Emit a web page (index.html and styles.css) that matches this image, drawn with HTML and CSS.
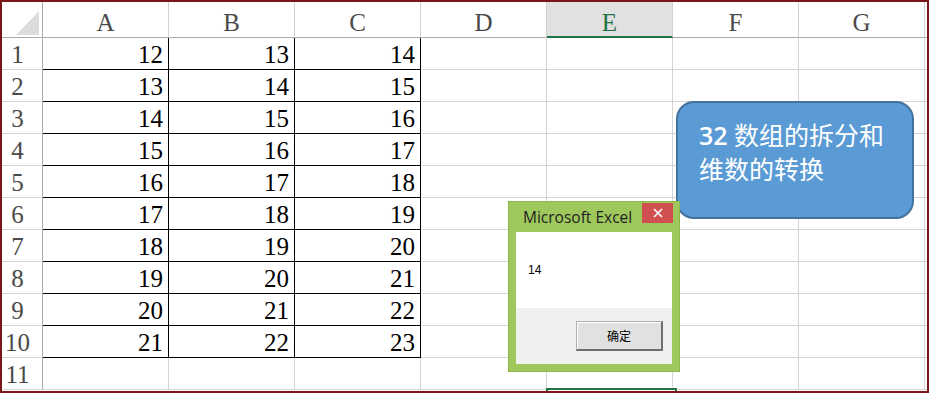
FILE: index.html
```html
<!DOCTYPE html>
<html>
<head>
<meta charset="utf-8">
<link rel="stylesheet" href="styles.css">
</head>
<body>
<div class="frame">
  <div class="sheet">
    <div class="hd corner"><div class="tri"></div></div>
    <div class="hd col">A</div><div class="hd col">B</div><div class="hd col">C</div><div class="hd col">D</div><div class="hd col sel">E</div><div class="hd col">F</div><div class="hd col">G</div><div class="hd col"></div>

    <div class="rh">1</div><div class="c b">12</div><div class="c b">13</div><div class="c b">14</div><div class="c"></div><div class="c"></div><div class="c"></div><div class="c"></div><div class="c"></div>
    <div class="rh">2</div><div class="c b">13</div><div class="c b">14</div><div class="c b">15</div><div class="c"></div><div class="c"></div><div class="c"></div><div class="c"></div><div class="c"></div>
    <div class="rh">3</div><div class="c b">14</div><div class="c b">15</div><div class="c b">16</div><div class="c"></div><div class="c"></div><div class="c"></div><div class="c"></div><div class="c"></div>
    <div class="rh">4</div><div class="c b">15</div><div class="c b">16</div><div class="c b">17</div><div class="c"></div><div class="c"></div><div class="c"></div><div class="c"></div><div class="c"></div>
    <div class="rh">5</div><div class="c b">16</div><div class="c b">17</div><div class="c b">18</div><div class="c"></div><div class="c"></div><div class="c"></div><div class="c"></div><div class="c"></div>
    <div class="rh">6</div><div class="c b">17</div><div class="c b">18</div><div class="c b">19</div><div class="c"></div><div class="c"></div><div class="c"></div><div class="c"></div><div class="c"></div>
    <div class="rh">7</div><div class="c b">18</div><div class="c b">19</div><div class="c b">20</div><div class="c"></div><div class="c"></div><div class="c"></div><div class="c"></div><div class="c"></div>
    <div class="rh">8</div><div class="c b">19</div><div class="c b">20</div><div class="c b">21</div><div class="c"></div><div class="c"></div><div class="c"></div><div class="c"></div><div class="c"></div>
    <div class="rh">9</div><div class="c b">20</div><div class="c b">21</div><div class="c b">22</div><div class="c"></div><div class="c"></div><div class="c"></div><div class="c"></div><div class="c"></div>
    <div class="rh">10</div><div class="c b">21</div><div class="c b">22</div><div class="c b">23</div><div class="c"></div><div class="c"></div><div class="c"></div><div class="c"></div><div class="c"></div>
    <div class="rh">11</div><div class="c"></div><div class="c"></div><div class="c"></div><div class="c"></div><div class="c"></div><div class="c"></div><div class="c"></div><div class="c"></div>
  </div>

  <div class="sel-box"></div>

  <div class="callout"><span class="num">32</span> 数组的拆分和<br>维数的转换</div>

  <div class="dialog">
    <div class="title">Microsoft Excel</div>
    <div class="close">
      <svg width="12" height="12" viewBox="0 0 12 12"><path d="M2 2 L10 10 M10 2 L2 10" stroke="#fff" stroke-width="1.6" fill="none"/></svg>
    </div>
    <div class="client">
      <div class="msg">14</div>
      <div class="foot"><div class="btn">确定</div></div>
    </div>
  </div>
</div>
</body>
</html>
```
FILE: styles.css
```css
html, body {
  margin: 0;
  padding: 0;
  background: #fff;
}
.frame {
  position: relative;
  width: 929px;
  height: 393px;
  box-sizing: border-box;
  border: 2px solid #7a1518;
  overflow: hidden;
}
.sheet {
  display: grid;
  grid-template-columns: 41px repeat(7, 126px) 1fr;
  grid-template-rows: 36px repeat(11, 32px) 1fr;
  height: 100%;
  font-family: "Liberation Serif", "Noto Sans CJK SC", serif;
  font-size: 25px;
}
.hd, .rh, .c {
  box-sizing: border-box;
  border-right: 1px solid #d4d4d4;
  border-bottom: 1px solid #d4d4d4;
  line-height: 26px;
  white-space: nowrap;
  overflow: hidden;
}
.hd {
  border-bottom-color: #ababab;
  border-right-color: #d0d0d0;
  color: #4a4a4a;
  text-align: center;
  padding-top: 8px;
}
.corner {
  position: relative;
  padding: 0;
  display: flex;
  justify-content: flex-end;
  align-items: flex-end;
  border-right-color: #ababab;
}
.tri {
  width: 23px;
  height: 24px;
  margin: 0 3px 2px 0;
  background: #dcdcdc;
  clip-path: polygon(100% 0, 100% 100%, 0 100%);
}
.hd.sel {
  background: #e1e1e1;
  color: #217346;
  border-bottom: 2px solid #217346;
}
.rh {
  color: #4a4a4a;
  text-align: center;
  padding: 4px 9px 0 0;
  border-right-color: #ababab;
  border-bottom-color: #d4d4d4;
}
.c {
  text-align: right;
  padding: 4px 5px 0 0;
  color: #000;
}
.c.b {
  border-right-color: #000;
  border-bottom-color: #000;
}
.sel-box {
  position: absolute;
  left: 544px;
  top: 386px;
  width: 127px;
  height: 20px;
  border: 2px solid #217346;
}
.callout {
  position: absolute;
  left: 674px;
  top: 99px;
  width: 238px;
  height: 118px;
  box-sizing: border-box;
  background: #5b9bd5;
  border: 2px solid #41719c;
  border-radius: 18px;
  color: #fff;
  font-family: "Open Sans", "Noto Sans CJK SC", sans-serif;
  font-size: 25px;
  line-height: 34px;
  padding: 15px 0 0 21px;
}
.num {
  font-weight: 600;
}
.dialog {
  position: absolute;
  left: 506px;
  top: 199px;
  width: 172px;
  height: 171px;
  box-sizing: border-box;
  background: #9ec85c;
  border: 1px solid #8cb84c;
  display: flex;
  flex-direction: column;
  padding: 0 7px 7px 7px;
}
.title {
  height: 30px;
  line-height: 30px;
  padding-left: 7px;
  font-family: "Open Sans", "Noto Sans", sans-serif;
  font-size: 15.5px;
  color: #1f1f1f;
}
.close {
  position: absolute;
  top: 1px;
  right: 6px;
  width: 31px;
  height: 20px;
  background: #d04f4f;
  display: flex;
  align-items: center;
  justify-content: center;
}
.client {
  flex: 1;
  display: flex;
  flex-direction: column;
  background: #fff;
  font-family: "Liberation Sans", "Noto Sans CJK SC", sans-serif;
  font-size: 12px;
  color: #000;
}
.msg {
  height: 76px;
  padding: 31px 0 0 12px;
  box-sizing: border-box;
}
.foot {
  flex: 1;
  background: #f0f0f0;
  display: flex;
  justify-content: flex-end;
  align-items: flex-start;
  padding: 13px 9px 0 0;
}
.btn {
  width: 87px;
  height: 30px;
  box-sizing: border-box;
  background: #e1e1e1;
  border: 1px solid #adadad;
  border-right: 2px solid #6f6f6f;
  border-bottom: 2px solid #6f6f6f;
  box-shadow: inset 1px 1px 0 #fff;
  text-align: center;
  line-height: 27px;
  font-family: "Noto Sans CJK SC", sans-serif;
}
```
